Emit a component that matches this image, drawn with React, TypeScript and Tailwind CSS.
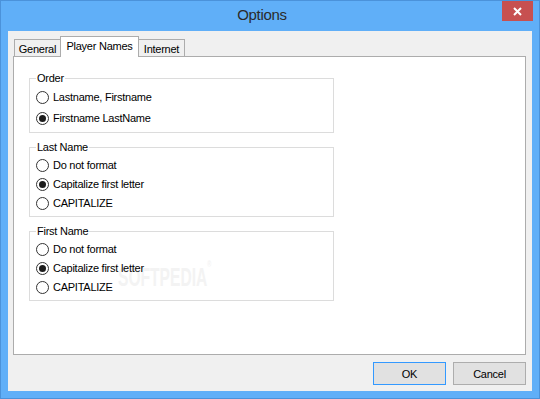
import React from "react";

const font = "font-['Liberation_Sans',Arial,sans-serif]";

type RadioProps = { label: string; checked?: boolean; rowClass: string };

const Radio = ({ label, checked, rowClass }: RadioProps) => (
  <div className={`relative z-10 flex items-center gap-[4px] ${rowClass}`}>
    <span className="flex h-[13px] w-[13px] items-center justify-center rounded-full border border-[#333333] bg-white">
      {checked && <span className="h-[7px] w-[7px] rounded-full bg-[#1c1c1c]" />}
    </span>
    <span className="leading-[13px]">{label}</span>
  </div>
);

type GroupProps = {
  title: string;
  options: string[];
  selected: number;
  rowClass: string;
};

const Group = ({ title, options, selected, rowClass }: GroupProps) => (
  <fieldset className="m-0 w-[305px] border border-[#dcdcdc] p-0">
    <legend className="ml-[6px] px-[1px] leading-[14px]">{title}</legend>
    <div className="flex flex-col pb-[3px] pl-[6px] pt-[2px]">
      {options.map((opt, i) => (
        <Radio key={opt} label={opt} checked={i === selected} rowClass={rowClass} />
      ))}
    </div>
  </fieldset>
);

const tabs = [
  { name: "General", active: false, width: "w-[47px]" },
  { name: "Player Names", active: true, width: "w-[79px]" },
  { name: "Internet", active: false, width: "w-[47px]" },
];

export default function App() {
  return (
    <div
      className={`flex h-[399px] w-[540px] flex-col border border-[#4b92da] bg-[#60aff8] ${font} text-[11px] tracking-[-0.25px] text-black`}
    >
      {/* title bar */}
      <div className="flex h-[30px] items-start">
        <div className="flex h-[29px] flex-1 items-center justify-center pl-[21px] text-[15px] tracking-[-0.3px] text-[#2b2b2b]">
          Options
        </div>
        <button className="mr-[6px] flex h-[20px] w-[31px] items-center justify-center bg-[#c75050]">
          <svg width="9" height="9" viewBox="0 0 9 9">
            <path d="M1 1 L8 8 M8 1 L1 8" stroke="white" strokeWidth="2" />
          </svg>
        </button>
      </div>

      {/* client area */}
      <div className="mx-[7px] mb-[7px] flex flex-1 flex-col bg-[#f0f0f0] pl-[5px] pr-[6px] pt-[5px]">
        <div className="relative z-10 mb-[-1px] flex h-[21px] items-end pl-[1px]">
          {tabs.map((t, i) =>
            t.active ? (
              <div
                key={t.name}
                className={`relative z-10 -ml-px flex h-[21px] ${t.width} items-start justify-center border border-b-0 border-[#acacac] bg-white pt-[3px] leading-[13px]`}
              >
                {t.name}
              </div>
            ) : (
              <div
                key={t.name}
                className={`${i > 0 ? "-ml-px" : ""} mb-[1px] flex h-[17px] ${t.width} items-start justify-center border border-b-0 border-[#acacac] bg-[#f0f0f0] pt-[3px] leading-[13px]`}
              >
                {t.name}
              </div>
            )
          )}
        </div>

        <div className="relative flex h-[299px] w-[513px] flex-col gap-[7px] border border-[#acacac] bg-white pl-[15px] pt-[14px]">
          <div className="pointer-events-none absolute left-[104px] top-[201px] origin-left scale-x-[0.6] text-[26px] font-bold tracking-[0px] text-[#f3f3f3]">
            SOFTPEDIA<span className="align-top text-[9px]">®</span>
          </div>
          <Group
            title="Order"
            options={["Lastname, Firstname", "Firstname LastName"]}
            selected={1}
            rowClass="h-[21px]"
          />
          <Group
            title="Last Name"
            options={["Do not format", "Capitalize first letter", "CAPITALIZE"]}
            selected={1}
            rowClass="h-[19px]"
          />
          <Group
            title="First Name"
            options={["Do not format", "Capitalize first letter", "CAPITALIZE"]}
            selected={1}
            rowClass="h-[19px]"
          />
        </div>

        <div className="mt-[7px] flex justify-end gap-[7px]">
          <button className="h-[23px] w-[73px] border border-[#3399ff] bg-[#e1e1e1] text-center leading-[20px]">
            OK
          </button>
          <button className="h-[23px] w-[73px] border border-[#adadad] bg-[#e1e1e1] text-center leading-[20px]">
            Cancel
          </button>
        </div>
      </div>
    </div>
  );
}
